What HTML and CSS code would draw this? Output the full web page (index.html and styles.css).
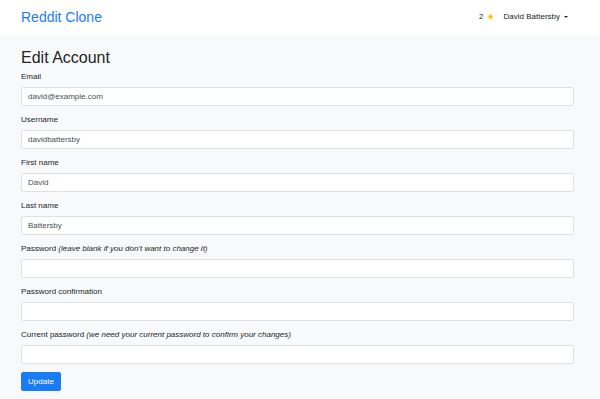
FILE: index.html
```html
<!DOCTYPE html>
<html lang="en">
<head>
<meta charset="utf-8">
<title>Edit Account</title>
<link rel="stylesheet" href="styles.css">
</head>
<body>
<nav class="navbar">
  <div class="container nav-inner">
    <a class="brand" href="#">Reddit Clone</a>
    <div class="nav-right">
      <span class="karma">2 <svg class="star" width="7" height="7" viewBox="0 0 24 24"><polygon points="12,1 15.1,8.3 23,9 17,14.2 18.8,22 12,17.9 5.2,22 7,14.2 1,9 8.9,8.3" fill="#ffc107"/></svg></span>
      <a class="user-toggle" href="#">David Battersby<span class="caret"></span></a>
    </div>
  </div>
</nav>
<main class="container main">
  <h2 class="title">Edit Account</h2>
  <form class="form">
    <div class="group">
      <label class="label">Email</label>
      <input class="control" type="text" value="david@example.com">
    </div>
    <div class="group">
      <label class="label">Username</label>
      <input class="control" type="text" value="davidbattersby">
    </div>
    <div class="group">
      <label class="label">First name</label>
      <input class="control" type="text" value="David">
    </div>
    <div class="group">
      <label class="label">Last name</label>
      <input class="control" type="text" value="Battersby">
    </div>
    <div class="group">
      <label class="label">Password <i>(leave blank if you don't want to change it)</i></label>
      <input class="control" type="password">
    </div>
    <div class="group">
      <label class="label">Password confirmation</label>
      <input class="control" type="password">
    </div>
    <div class="group">
      <label class="label">Current password <i>(we need your current password to confirm your changes)</i></label>
      <input class="control" type="password">
    </div>
    <button class="btn" type="button">Update</button>
  </form>
</main>
</body>
</html>
```
FILE: styles.css
```css
* { box-sizing: border-box; }
html, body {
  margin: 0;
  padding: 0;
}
body {
  background: #f8f9fa;
  font-family: "Liberation Sans", Arial, sans-serif;
  font-size: 8px;
  line-height: 1.5;
  color: #212529;
}
.container {
  width: 553px;
  margin-left: 21px;
}
.navbar {
  background: #fff;
  height: 35px;
}
.nav-inner {
  height: 35px;
  display: flex;
  align-items: center;
  justify-content: space-between;
}
.brand {
  font-size: 14px;
  color: #1a7cf5;
  text-decoration: none;
  line-height: 1;
  margin-top: -2px;
}
.nav-right {
  display: flex;
  align-items: center;
  padding-right: 6px;
  margin-top: -1px;
}
.karma {
  display: flex;
  align-items: center;
  gap: 3px;
  color: #212529;
}
.star { display: block; margin-top: -1px; }
.user-toggle {
  color: #212529;
  text-decoration: none;
  margin-left: 10px;
  display: flex;
  align-items: center;
}
.caret {
  display: inline-block;
  width: 0;
  height: 0;
  margin-left: 4px;
  border-top: 2.5px solid #212529;
  border-left: 2.5px solid transparent;
  border-right: 2.5px solid transparent;
}
.main {
  padding-top: 12.5px;
}
.title {
  font-size: 16px;
  font-weight: 500;
  line-height: 1.2;
  margin: 0 0 4px;
}
.form { margin: 0; }
.group {
  margin-bottom: 8px;
}
.label {
  display: block;
  line-height: 12px;
  margin-bottom: 4px;
}
.control {
  display: block;
  width: 100%;
  height: 19px;
  padding: 3px 6px;
  font-family: inherit;
  font-size: 8px;
  color: #495057;
  background: #fff;
  border: 1px solid #dde1e5;
  border-radius: 2px;
  outline: none;
}
.btn {
  display: block;
  height: 19px;
  padding: 0 6px;
  font-family: inherit;
  font-size: 8px;
  color: #fff;
  background: #1a7cf5;
  border: 1px solid #1a7cf5;
  border-radius: 2px;
  width: 40px;
}
```
